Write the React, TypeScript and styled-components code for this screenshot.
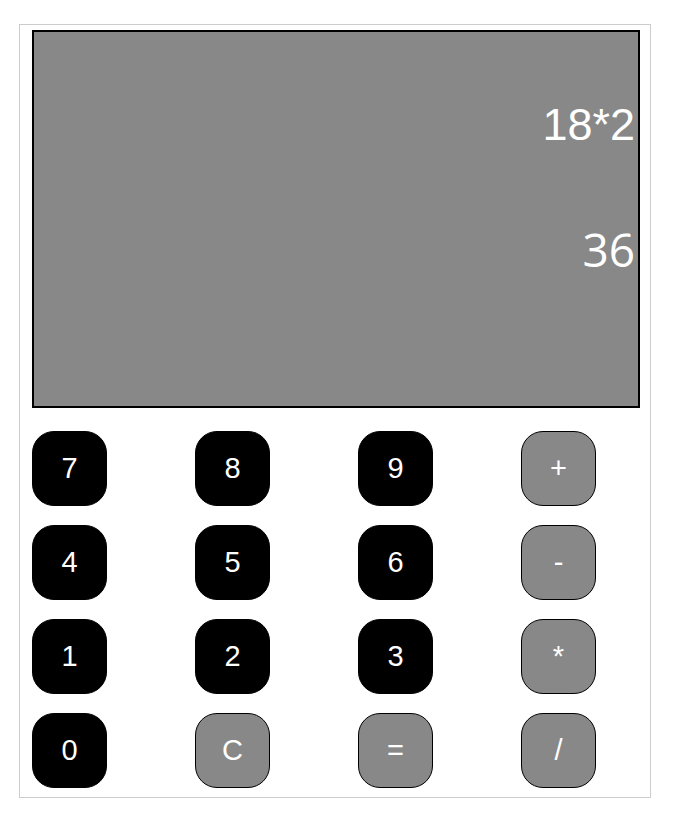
import React, { useState } from 'react'
import styled, { createGlobalStyle } from 'styled-components'

const GlobalStyle = createGlobalStyle`
  body {
    margin: 0;
    background: #fff;
    font-family: "Liberation Sans", Arial, sans-serif;
  }
`

const keys: { label: string; op?: boolean }[] = [
  { label: '7' }, { label: '8' }, { label: '9' }, { label: '+', op: true },
  { label: '4' }, { label: '5' }, { label: '6' }, { label: '-', op: true },
  { label: '1' }, { label: '2' }, { label: '3' }, { label: '*', op: true },
  { label: '0' }, { label: 'C', op: true }, { label: '=', op: true }, { label: '/', op: true },
]

export default function App() {
  const [expr, setExpr] = useState('18*2')
  const [result, setResult] = useState('36')

  const press = (k: string) => {
    if (k === 'C') {
      setExpr('')
      setResult('')
    } else if (k === '=') {
      try {
        // eslint-disable-next-line no-new-func
        setResult(String(Function(`return (${expr})`)()))
      } catch {
        setResult('Error')
      }
    } else {
      setExpr(expr + k)
    }
  }

  return (
    <>
      <GlobalStyle />
      <Calculator>
        <Screen>
          <Expression>{expr}</Expression>
          <Result>{result}</Result>
        </Screen>
        <Keypad>
          {keys.map((k) => (
            <Key key={k.label} $op={k.op} onClick={() => press(k.label)}>
              {k.label}
            </Key>
          ))}
        </Keypad>
      </Calculator>
    </>
  )
}

const Calculator = styled.div`
  box-sizing: border-box;
  width: 632px;
  height: 774px;
  margin: 24px 0 0 19px;
  padding: 5px 10px 0 12px;
  border: 1px solid #cccccc;
`

const Screen = styled.div`
  box-sizing: border-box;
  width: 608px;
  height: 378px;
  padding: 65px 3px 0 0;
  background: #888888;
  border: 2px solid #000;
  display: flex;
  flex-direction: column;
  align-items: flex-end;
  color: #fff;
`

const Expression = styled.div`
  font-family: "Liberation Sans", Arial, sans-serif;
  font-size: 45px;
  line-height: 56px;
  height: 56px;
`

const Result = styled.div`
  margin-top: 68px;
  font-family: "Open Sans", sans-serif;
  font-size: 46px;
  line-height: 56px;
  height: 56px;
`

const Keypad = styled.div`
  display: grid;
  grid-template-columns: repeat(4, 75px);
  grid-auto-rows: 75px;
  column-gap: 88px;
  row-gap: 19px;
  margin-top: 23px;
`

const Key = styled.button<{ $op?: boolean }>`
  box-sizing: border-box;
  width: 75px;
  height: 75px;
  padding: 0;
  border-radius: 22px;
  border: 1px solid #000;
  background: ${(p) => (p.$op ? '#888888' : '#000')};
  color: #fff;
  font-family: "Liberation Sans", Arial, sans-serif;
  font-size: 29px;
  cursor: pointer;
`
